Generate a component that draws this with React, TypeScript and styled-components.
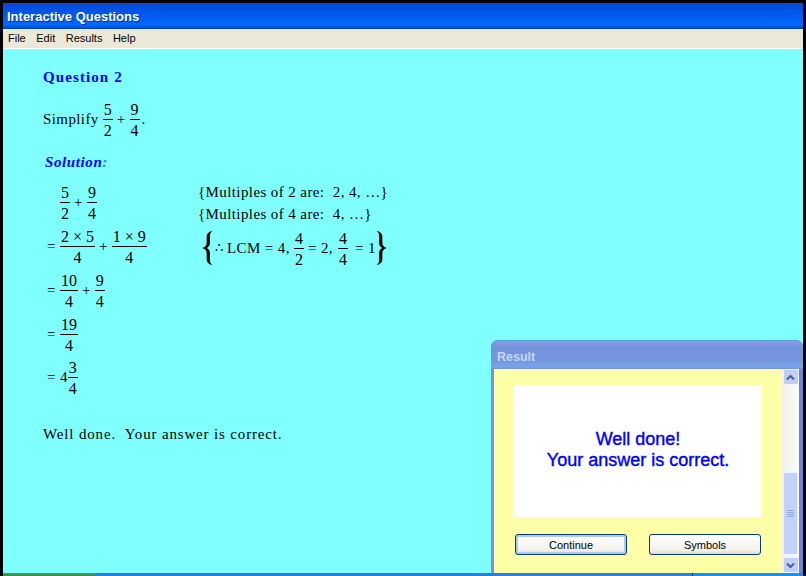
import React from "react";
import styled, { createGlobalStyle } from "styled-components";

const Global = createGlobalStyle`
  html, body { margin: 0; padding: 0; background: #000; }
  #root { width: 806px; height: 576px; overflow: hidden; }
`;

const Screen = styled.div`
  width: 806px;
  height: 576px;
  box-sizing: border-box;
  padding: 3px 3px 0;
  background: #000;
  display: flex;
  flex-direction: column;
`;

const TitleBar = styled.div`
  height: 26px;
  flex: none;
  display: flex;
  align-items: center;
  padding: 0 4px;
  background: linear-gradient(180deg, #0a46c8 0%, #0050e0 20%, #005cf0 50%, #0068ff 85%, #0040b8 100%);
  color: #fff;
  font: bold 13px "Liberation Sans", Arial, sans-serif;
  text-shadow: 1px 1px 0 #0a2f8c;
`;

const MenuBar = styled.div`
  height: 18px;
  flex: none;
  display: flex;
  align-items: center;
  gap: 10.5px;
  padding: 0 5px 1px;
  background: #ebe8d8;
  border-bottom: 1px solid #fff;
  color: #000;
  font: 11px "Liberation Sans", Arial, sans-serif;
`;

const Main = styled.main`
  position: relative;
  flex: 1;
  min-height: 0;
  background: #80ffff;
  padding: 19px 0 0 40px;
  color: #000;
  font: 15px "Liberation Serif", "Times New Roman", serif;
  letter-spacing: 0.4px;
`;

const Question = styled.h1`
  margin: 0;
  height: 18px;
  color: #0000ff;
  font: bold 15px/18px "Liberation Serif", serif;
  letter-spacing: 1.1px;
`;

const Statement = styled.div`
  display: flex;
  align-items: center;
  height: 44px;
  margin-top: 11px;
`;

const Solution = styled.h2`
  margin: 12px 0 0 2px;
  color: #0000ff;
  font: italic bold 15px/18px "Liberation Serif", serif;
  letter-spacing: 0.6px;
`;

const Colon = styled.span`
  color: #2a7ff0;
`;

const Work = styled.div`
  display: flex;
  margin-top: 10px;
`;

const Steps = styled.div`
  width: 155px;
  flex: none;
  display: flex;
  flex-direction: column;
`;

const Step = styled.div<{ $indent?: boolean }>`
  height: 43.75px;
  display: flex;
  align-items: center;
  white-space: pre;
  padding-left: ${(p) => (p.$indent ? 15 : 4)}px;
`;

const Reasons = styled.div`
  display: flex;
  flex-direction: column;
`;

const Reason = styled.div`
  height: 22px;
  line-height: 22px;
  white-space: pre;
`;

const LcmRow = styled.div`
  height: 44px;
  margin-top: 1px;
  display: flex;
  align-items: center;
  white-space: pre;
  padding-left: 4px;
`;

const Therefore = styled.span`
  width: 12px;
  margin-left: 2px;
  font-size: 13px;
`;

const Run = styled.span<{ $l?: number; $r?: number }>`
  margin-left: ${(p) => p.$l ?? 0}px;
  margin-right: ${(p) => p.$r ?? 0}px;
`;

const Frac = styled.span<{ $tight?: boolean }>`
  display: inline-flex;
  flex-direction: column;
  align-items: center;
  margin: 2px ${(p) => (p.$tight ? 0 : 2)}px 0;
  font-size: 16px;
  letter-spacing: 0;
  line-height: 18px;
`;

const Top = styled.span`
  padding: 0 1px;
`;

const Bottom = styled.span`
  align-self: stretch;
  text-align: center;
  border-top: 1px solid #000;
  padding-top: 2px;
`;

const Op = styled.span`
  margin: 0 2px;
`;

const Feedback = styled.p`
  margin: 24px 0 0;
  line-height: 20px;
  white-space: pre;
  letter-spacing: 0.84px;
`;

const Dialog = styled.section`
  position: absolute;
  right: 0;
  bottom: 0;
  width: 312px;
  height: 233px;
  box-sizing: border-box;
  display: flex;
  flex-direction: column;
  padding: 0 4px 0 3px;
  border-radius: 7px 7px 0 0;
  background: linear-gradient(90deg, #7a93de, #6f82d6);
  letter-spacing: 0;
`;

const DialogTitle = styled.div`
  height: 29px;
  flex: none;
  display: flex;
  align-items: center;
  box-sizing: border-box;
  margin: 0 -4px 0 -3px;
  padding: 3px 0 0 6px;
  border-radius: 7px 7px 0 0;
  border-top: 1px solid #5aa0e0;
  background: linear-gradient(180deg, #8a9fe4 0%, #7693de 20%, #7496de 70%, #78a6e8 90%, #7590da 100%);
  color: #c6d6f4;
  font: bold 12.5px "Liberation Sans", Arial, sans-serif;
`;

const DialogBody = styled.div`
  flex: 1;
  min-height: 0;
  display: flex;
`;

const Content = styled.div`
  flex: 1;
  background: #ffffa8;
  padding: 16px 20px 0;
  display: flex;
  flex-direction: column;
`;

const Message = styled.div`
  height: 132px;
  flex: none;
  box-sizing: border-box;
  padding-bottom: 3px;
  background: #fff;
  display: flex;
  flex-direction: column;
  align-items: center;
  justify-content: center;
  color: #0000ff;
  font: 18px/21px "Liberation Sans", Arial, sans-serif;
  -webkit-text-stroke: 0.4px #0000ff;
`;

const Actions = styled.div`
  display: flex;
  justify-content: space-between;
  margin: 17px 1px 0;
`;

const Button = styled.button<{ $primary?: boolean }>`
  width: 112px;
  height: 21px;
  padding: 0;
  border: 1px solid #003c74;
  border-radius: 3px;
  background: linear-gradient(180deg, #fff, #f2f1ea 80%, #dcd8cc);
  box-shadow: ${(p) => (p.$primary ? "inset 0 0 0 2px #b3c8ee" : "none")};
  color: #000;
  font: 11px "Liberation Sans", Arial, sans-serif;
`;

const ScrollBar = styled.div`
  width: 17px;
  flex: none;
  display: flex;
  flex-direction: column;
  align-items: center;
  background: linear-gradient(90deg, #f0efe8, #fdfdfa);
`;

const ScrollButton = styled.div`
  width: 16px;
  height: 16px;
  flex: none;
  box-sizing: border-box;
  display: flex;
  align-items: center;
  justify-content: center;
  border: 1px solid #eef2fc;
  border-radius: 2px;
  background: #bfd0f6;
  color: #4d6185;
`;

const Track = styled.div`
  flex: 1;
  display: flex;
  flex-direction: column;
  justify-content: flex-end;
  align-self: stretch;
  padding: 0 0 2px;
`;

const Thumb = styled.div`
  height: 83px;
  box-sizing: border-box;
  margin: 0 1px;
  display: flex;
  flex-direction: column;
  align-items: center;
  justify-content: center;
  gap: 1px;
  border: 1px solid #eef2fc;
  border-radius: 2px;
  background: #c2d2f8;
`;

const Grip = styled.span`
  width: 7px;
  height: 1px;
  background: #8fa8e4;
`;

const Taskbar = styled.div`
  height: 3px;
  flex: none;
  display: flex;
  align-items: stretch;
`;

const StartEdge = styled.div`
  width: 93px;
  background: linear-gradient(180deg, #5a9a5a, #3a8a3a);
`;

const TaskEdge = styled.div`
  width: 596px;
  background: #2a7ce8;
`;

const TrayEdge = styled.div`
  flex: 1;
  border-left: 1px solid #103a80;
  background: #1a90ec;
`;

const Brace = ({ flip }: { flip?: boolean }) => (
  <svg width="11" height="34" viewBox="0 0 11 34" style={flip ? { transform: "scaleX(-1)" } : undefined}>
    <path
      d="M9.5 .5C6 1.500 5 3 5 7v5c0 2.500-1.500 4-4 5 2.500 1 4 2.500 4 5v5c0 4 1 5.500 4.500 6.500C7.500 32 7.500 30 7.500 27v-5c0-2.500-1-4-3.500-5C6.500 16 7.500 14.500 7.500 12V7c0-3 0-5 2-6.500z"
      fill="#000"
      stroke="#000"
      strokeWidth=".7"
    />
  </svg>
);

const F = ({ n, d, tight }: { n: string; d: string; tight?: boolean }) => (
  <Frac $tight={tight}>
    <Top>{n}</Top>
    <Bottom>{d}</Bottom>
  </Frac>
);

const Arrow = ({ down }: { down?: boolean }) => (
  <svg width="9" height="7" viewBox="0 0 9 7">
    <path d={down ? "M1 1.500l3.500 3.500L8 1.500" : "M1 5.500L4.500 2 8 5.500"} fill="none" stroke="currentColor" strokeWidth="2" />
  </svg>
);

export default function App() {
  return (
    <Screen>
      <Global />
      <TitleBar>Interactive Questions</TitleBar>
      <MenuBar>
        <span>File</span>
        <span>Edit</span>
        <span>Results</span>
        <span>Help</span>
      </MenuBar>
      <Main>
        <Question>Question 2</Question>
        <Statement>
          <Run $r={2}>Simplify</Run>
          <F n="5" d="2" />
          <Op>+</Op>
          <F n="9" d="4" />
          <span>.</span>
        </Statement>
        <Solution>
          Solution<Colon>:</Colon>
        </Solution>
        <Work>
          <Steps>
            <Step $indent>
              <F n="5" d="2" />
              <Op>+</Op>
              <F n="9" d="4" />
            </Step>
            <Step>
              <Run $r={2}>=</Run>
              <F n="2 × 5" d="4" />
              <Op>+</Op>
              <F n="1 × 9" d="4" />
            </Step>
            <Step>
              <Run $r={2}>=</Run>
              <F n="10" d="4" />
              <Op>+</Op>
              <F n="9" d="4" />
            </Step>
            <Step>
              <Run $r={2}>=</Run>
              <F n="19" d="4" />
            </Step>
            <Step>
              <Run $r={4}>=</Run>
              <span>4</span>
              <F n="3" d="4" tight />
            </Step>
          </Steps>
          <Reasons>
            <Reason>{"{Multiples of 2 are:  2, 4, …}"}</Reason>
            <Reason>{"{Multiples of 4 are:  4, …}"}</Reason>
            <LcmRow>
              <Brace />
              <Therefore>∴</Therefore>
              <Run $r={2}>LCM = 4,</Run>
              <F n="4" d="2" />
              <Run $l={2} $r={3}>= 2,</Run>
              <F n="4" d="4" />
              <Run $l={5}>= 1</Run>
              <Brace flip />
            </LcmRow>
          </Reasons>
        </Work>
        <Feedback>{"Well done.  Your answer is correct."}</Feedback>
        <Dialog>
          <DialogTitle>Result</DialogTitle>
          <DialogBody>
            <Content>
              <Message>
                <div>Well done!</div>
                <div>Your answer is correct.</div>
              </Message>
              <Actions>
                <Button $primary>Continue</Button>
                <Button>Symbols</Button>
              </Actions>
            </Content>
            <ScrollBar>
              <ScrollButton>
                <Arrow />
              </ScrollButton>
              <Track>
                <Thumb>
                  <Grip />
                  <Grip />
                  <Grip />
                  <Grip />
                </Thumb>
              </Track>
              <ScrollButton>
                <Arrow down />
              </ScrollButton>
            </ScrollBar>
          </DialogBody>
        </Dialog>
      </Main>
      <Taskbar>
        <StartEdge />
        <TaskEdge />
        <TrayEdge />
      </Taskbar>
    </Screen>
  );
}
